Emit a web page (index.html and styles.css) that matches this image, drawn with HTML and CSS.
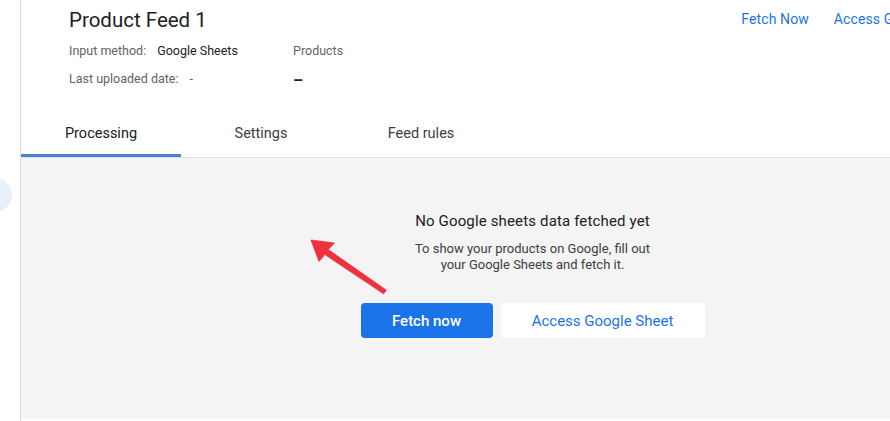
FILE: index.html
```html
<!DOCTYPE html>
<html>
<head>
<meta charset="utf-8">
<link rel="stylesheet" href="styles.css">
</head>
<body>
<div class="page">
  <aside class="rail"><div class="rail-dot"></div></aside>
  <main class="panel">
    <header class="header">
      <div class="header-top">
        <h1 class="title">Product Feed 1</h1>
        <nav class="actions">
          <a class="link">Fetch Now</a>
          <a class="link">Access Google Sheet</a>
        </nav>
      </div>
      <div class="meta">
        <div class="meta-row">
          <span class="meta-label">Input method:</span>
          <span class="meta-value">Google Sheets</span>
        </div>
        <div class="meta-col">Products</div>
        <div class="meta-row">
          <span class="meta-label">Last uploaded date:</span>
          <span class="meta-label">-</span>
        </div>
        <div class="meta-dash">–</div>
      </div>
    </header>
    <div class="tabs">
      <div class="tab active">Processing</div>
      <div class="tab">Settings</div>
      <div class="tab">Feed rules</div>
    </div>
    <section class="content">
      <div class="empty">
        <h2 class="empty-title">No Google sheets data fetched yet</h2>
        <p class="empty-text">To show your products on Google, fill out<br>your Google Sheets and fetch it.</p>
        <div class="buttons">
          <button class="btn btn-primary">Fetch now</button>
          <button class="btn btn-secondary">Access Google Sheet</button>
        </div>
      </div>
    </section>
  </main>
</div>
<svg class="arrow" width="890" height="421" viewBox="0 0 890 421">
  <polygon points="311,240 334.5,243 328.2,249.5 386.4,290.2 383.6,293.8 324.8,254.5 319,261.5" fill="#f0303c" stroke="#f0303c" stroke-width="0.8" stroke-linejoin="round"/>
</svg>
</body>
</html>
```
FILE: styles.css
```css
html, body {
  margin: 0;
  padding: 0;
  width: 890px;
  height: 421px;
  overflow: hidden;
  background: #ffffff;
  font-family: Roboto, "Liberation Sans", sans-serif;
  color: #202124;
}
.page {
  display: flex;
  height: 421px;
  position: relative;
}
.rail {
  width: 20px;
  flex: none;
  border-right: 1px solid #dadce0;
  background: #fff;
  overflow: hidden;
  padding-top: 178px;
  box-sizing: content-box;
}
.rail-dot {
  width: 34px;
  height: 34px;
  margin-left: -22px;
  border-radius: 50%;
  background: #e8f0fe;
}
.panel {
  width: 1023px;
  flex: none;
  display: flex;
  flex-direction: column;
  height: 419px;
}
.header {
  padding-left: 48px;
  height: 110px;
  box-sizing: border-box;
}
.header-top {
  display: flex;
  align-items: center;
  height: 38px;
  padding-right: 76px;
}
.title {
  margin: 0;
  font-size: 20.5px;
  font-weight: 400;
  color: #202124;
  flex: 1;
  padding-top: 1px;
}
.actions {
  display: flex;
  gap: 25px;
}
.link {
  color: #1a73e8;
  font-size: 14px;
  font-weight: 400;
  letter-spacing: 0.1px;
}
.meta {
  display: grid;
  grid-template-columns: 224px auto;
  grid-auto-rows: 28px;
  align-items: center;
  font-size: 12.5px;
  margin-top: -2px;
}
.meta-row {
  display: flex;
  gap: 11px;
}
.meta-label {
  color: #5f6368;
}
.meta-value {
  color: #202124;
}
.meta-col {
  color: #5f6368;
}
.meta-dash {
  color: #202124;
  font-weight: 700;
  font-size: 16px;
  padding-top: 4px;
}
.tabs {
  display: flex;
  height: 47px;
  border-bottom: 1px solid #e0e0e0;
}
.tab {
  width: 160px;
  display: flex;
  align-items: center;
  justify-content: center;
  font-size: 14.5px;
  color: #3c4043;
  box-sizing: border-box;
  padding-top: 0;
}
.tab.active {
  color: #202124;
  border-bottom: 3px solid #4a7fd4;
  padding-top: 3px;
}
.content {
  flex: 1;
  background: #f4f4f4;
  display: flex;
  justify-content: center;
}
.empty {
  display: flex;
  flex-direction: column;
  align-items: center;
  padding-top: 53px;
}
.empty-title {
  margin: 0;
  font-size: 15px;
  font-weight: 400;
  color: #202124;
  line-height: 20px;
  letter-spacing: 0.15px;
}
.empty-text {
  margin: 10px 0 0;
  font-size: 13px;
  line-height: 16px;
  color: #3c4043;
  text-align: center;
}
.buttons {
  display: flex;
  gap: 8px;
  margin-top: 30px;
}
.btn {
  height: 35px;
  border: none;
  border-radius: 4px;
  font-family: Roboto, "Liberation Sans", sans-serif;
  font-size: 15px;
  padding: 0;
}
.btn-primary {
  width: 132px;
  background: #1a73e8;
  color: #fff;
  font-weight: 500;
}
.btn-secondary {
  width: 204px;
  background: #fff;
  color: #1a73e8;
}
.arrow {
  position: absolute;
  left: 0;
  top: 0;
  pointer-events: none;
}
```
